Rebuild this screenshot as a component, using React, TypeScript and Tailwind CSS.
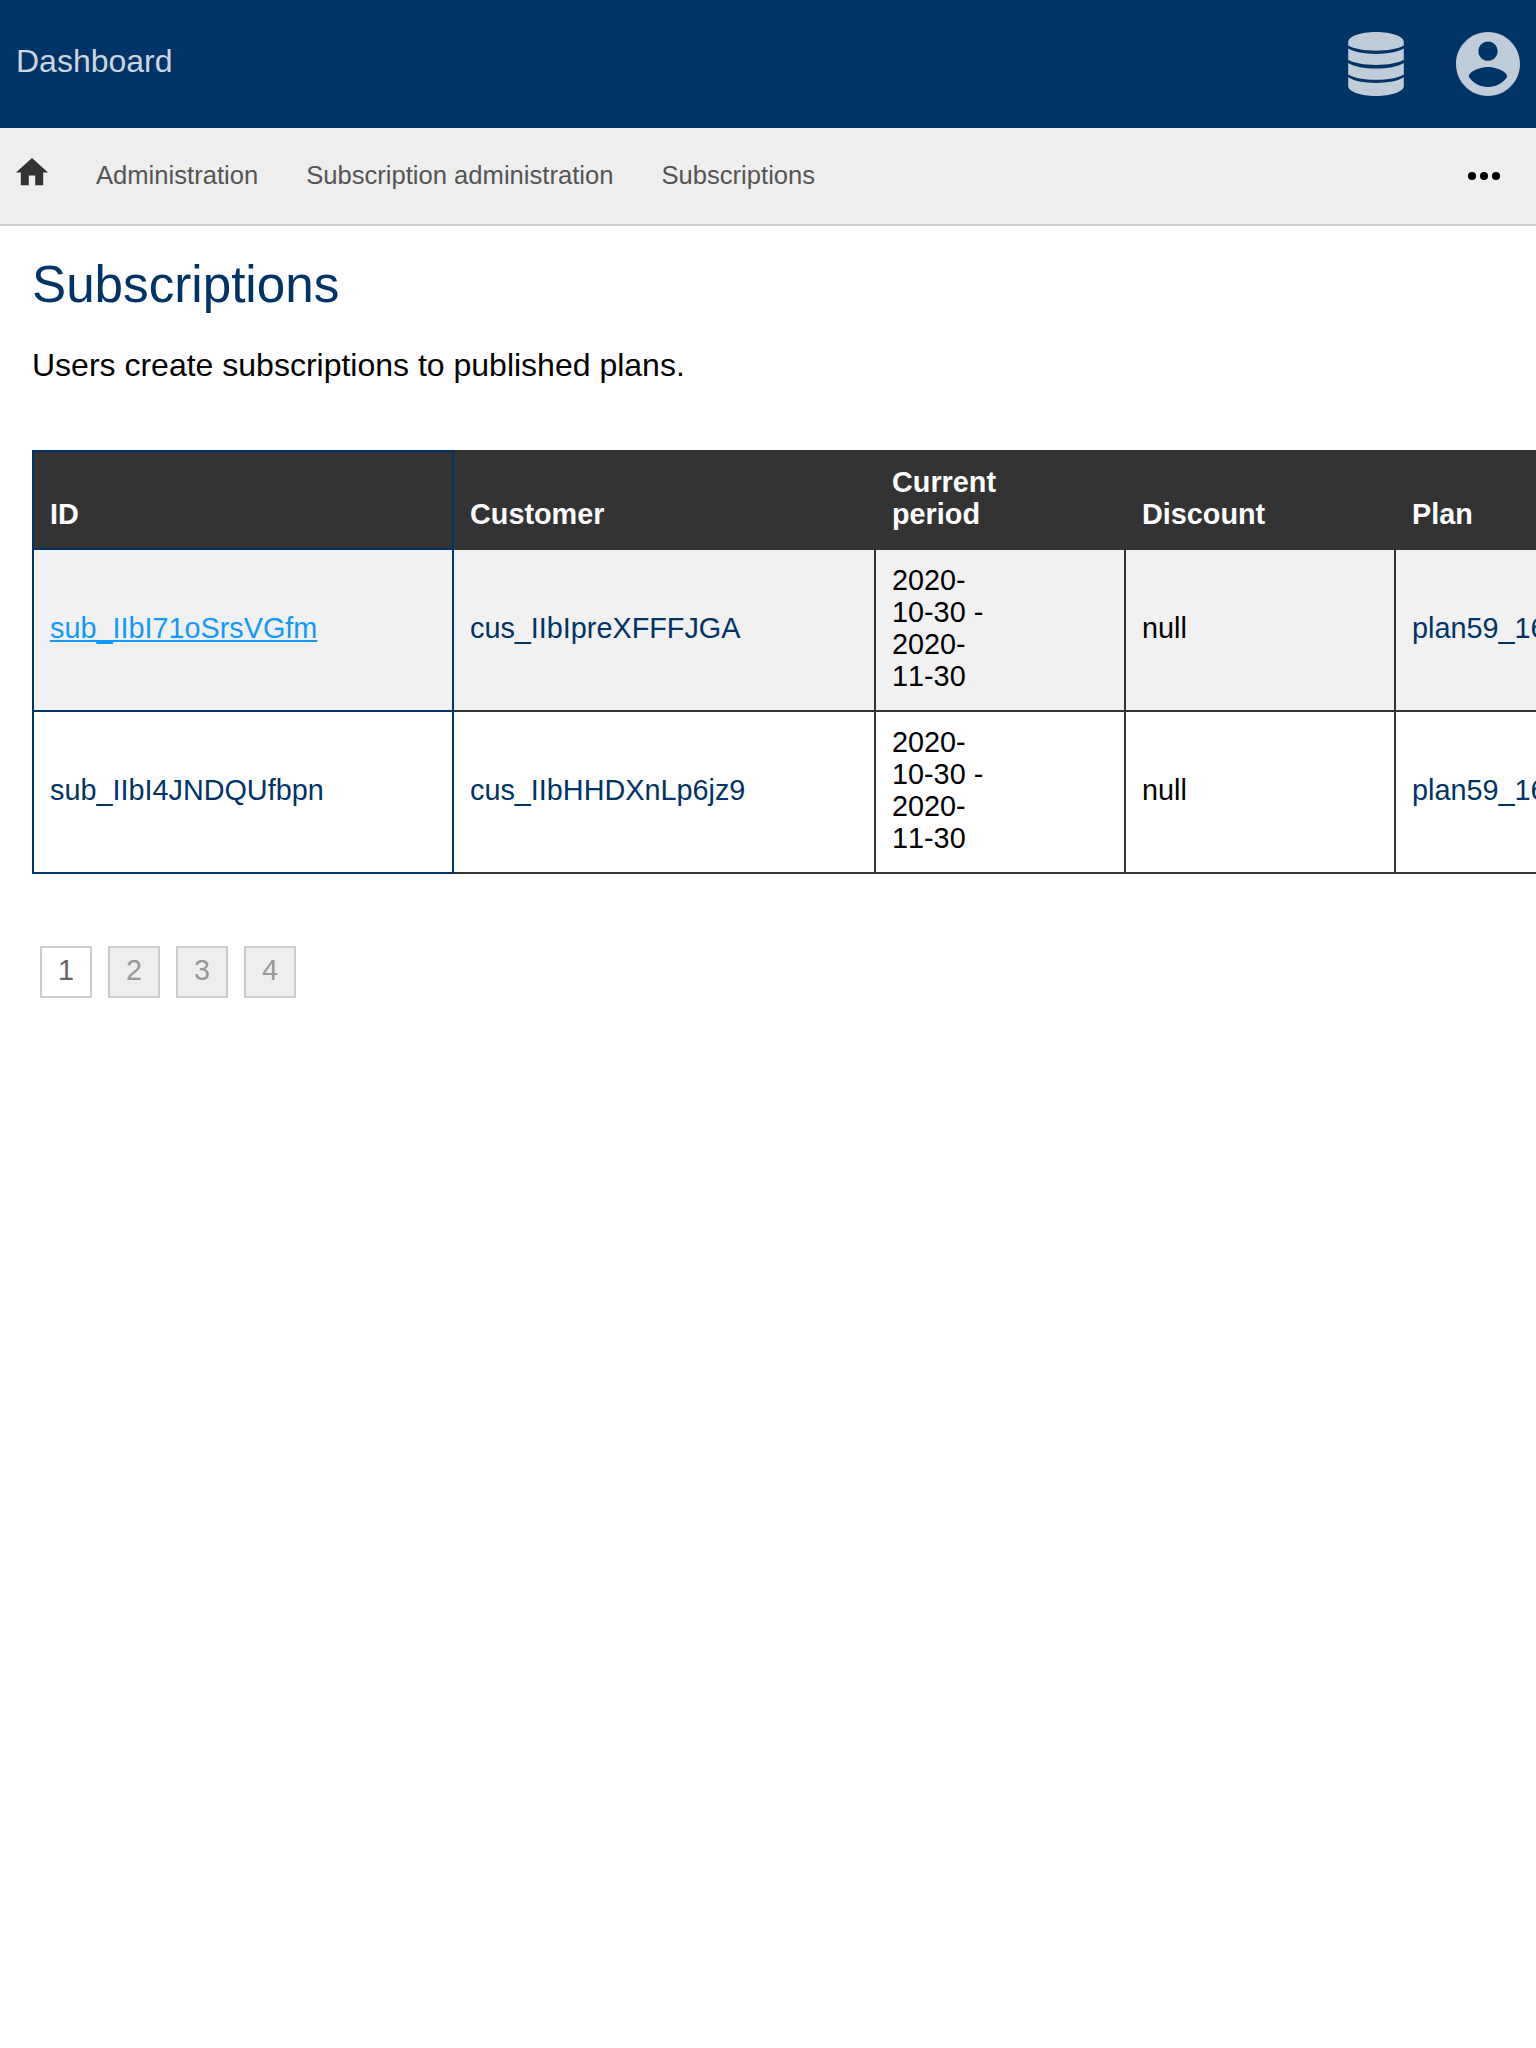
const columns = ["ID", "Customer", "Current period", "Discount", "Plan"];

const rows = [
  { id: "sub_IIbI71oSrsVGfm", customer: "cus_IIbIpreXFFFJGA", plan: "plan59_1604083204" },
  { id: "sub_IIbI4JNDQUfbpn", customer: "cus_IIbHHDXnLp6jz9", plan: "plan59_1604083204" },
];

const crumbs = ["Administration", "Subscription administration", "Subscriptions"];

function DatabaseIcon() {
  return (
    <svg viewBox="0 0 56 64" className="h-16 w-14" fill="#bfccd9">
      <path d="M28 0C43.500 0 55.800 4.400 55.800 10V13.500C50 16.800 40 18.700 28 18.700S6 16.800 0.200 13.500V10C0.200 4.400 12.500 0 28 0z" />
      <path d="M0.200 16.500C6 20 16 21.900 28 21.900S50 20 55.800 16.500V27.800C50 31.100 40 33 28 33S6 31.100 0.200 27.800z" />
      <path d="M0.200 30.900C6 34.500 16 36.500 28 36.500S50 34.500 55.800 30.900V42.400C50 45.900 40 47.800 28 47.800S6 45.900 0.200 42.400z" />
      <path d="M0.200 45.200C6 48.900 16 50.900 28 50.900S50 48.900 55.800 45.200V54C55.800 59.600 43.500 64 28 64S0.200 59.600 0.200 54z" />
    </svg>
  );
}

function AccountIcon() {
  return (
    <svg viewBox="2 2 20 20" className="size-16" fill="#bfccd9">
      <path d="M12 2C6.480 2 2 6.480 2 12s4.480 10 10 10 10-4.480 10-10S17.520 2 12 2zm0 3c1.660 0 3 1.340 3 3s-1.340 3-3 3-3-1.340-3-3 1.340-3 3-3zm0 14.200c-2.500 0-4.710-1.280-6-3.220.030-1.990 4-3.080 6-3.080 1.990 0 5.970 1.090 6 3.080-1.290 1.940-3.500 3.220-6 3.220z" />
    </svg>
  );
}

export default function App() {
  return (
    <div className="h-[2048px] w-full overflow-hidden bg-white font-['Liberation_Sans',Arial,sans-serif] text-[32px] text-black">
      <header className="flex h-32 items-center justify-between bg-[#003366] px-4">
        <a className="pb-1.5 leading-9 text-[#ccd6e0]">Dashboard</a>
        <div className="flex gap-[52px]">
          <DatabaseIcon />
          <AccountIcon />
        </div>
      </header>

      <nav className="flex h-[98px] items-center border-b-2 border-[#cccccc] bg-[#eeeeee] pr-9 pl-4 text-[25.6px] leading-7 text-[#555555]">
        <svg viewBox="2 3 20 17" className="mr-12 mb-2 h-[27.2px] w-8" fill="#333333">
          <path d="M10 20v-6h4v6h5v-8h3L12 3 2 12h3v8z" />
        </svg>
        <div className="flex gap-12 pb-0.5">
          {crumbs.map((crumb) => (
            <a key={crumb}>{crumb}</a>
          ))}
        </div>
        <svg viewBox="0 0 32 8" className="ml-auto h-2 w-8" fill="#000000">
          <circle cx="4" cy="4" r="4" />
          <circle cx="16" cy="4" r="4" />
          <circle cx="28" cy="4" r="4" />
        </svg>
      </nav>

      <main className="px-8 pt-[30px]">
        <h1 className="text-[51.2px] leading-[57px] text-[#003366]">Subscriptions</h1>
        <p className="mt-[34px] leading-9">Users create subscriptions to published plans.</p>

        <table className="mt-[67px] w-[1800px] table-fixed border-collapse text-left text-[28.8px] leading-8">
          <colgroup>
            <col className="w-[420px]" />
            <col className="w-[422px]" />
            <col className="w-[250px]" />
            <col className="w-[270px]" />
            <col />
          </colgroup>
          <thead>
            <tr className="h-[98px] bg-[#333333] align-bottom text-white">
              {columns.map((column) => (
                <th
                  key={column}
                  className="border-2 border-[#333333] px-4 pt-[14px] pb-[18px] font-bold first:border-[#003366]"
                >
                  <span className="block max-w-[150px]">{column}</span>
                </th>
              ))}
            </tr>
          </thead>
          <tbody>
            {rows.map((row, index) => (
              <tr key={row.id} className="h-[162px] odd:bg-[#f1f1f1]">
                <td className="border-2 border-[#003366] px-4 pt-[14px] pb-[18px]">
                  <a
                    className={
                      index === 0
                        ? "text-[#1199ff] underline [text-decoration-skip-ink:none]"
                        : "text-[#003366]"
                    }
                  >
                    {row.id}
                  </a>
                </td>
                <td className="border-2 border-[#333333] px-4 pt-[14px] pb-[18px] text-[#003366]">
                  {row.customer}
                </td>
                <td className="border-2 border-[#333333] px-4 pt-[14px] pb-[18px] [font-kerning:none]">
                  2020-
                  <br />
                  10-30 -
                  <br />
                  2020-
                  <br />
                  11-30
                </td>
                <td className="border-2 border-[#333333] px-4 pt-[14px] pb-[18px]">null</td>
                <td className="border-2 border-[#333333] px-4 pt-[14px] pb-[18px] text-[#003366]">
                  {row.plan}
                </td>
              </tr>
            ))}
          </tbody>
        </table>

        <ul className="mt-[72px] ml-2 flex gap-4 text-[28.8px] leading-[44px]">
          {[1, 2, 3, 4].map((page) => (
            <li
              key={page}
              className={
                page === 1
                  ? "size-[52px] border-2 border-[#cccccc] bg-white text-center text-[#666666]"
                  : "size-[52px] border-2 border-[#cccccc] bg-[#eeeeee] text-center text-[#999999]"
              }
            >
              {page}
            </li>
          ))}
        </ul>
      </main>
    </div>
  );
}
